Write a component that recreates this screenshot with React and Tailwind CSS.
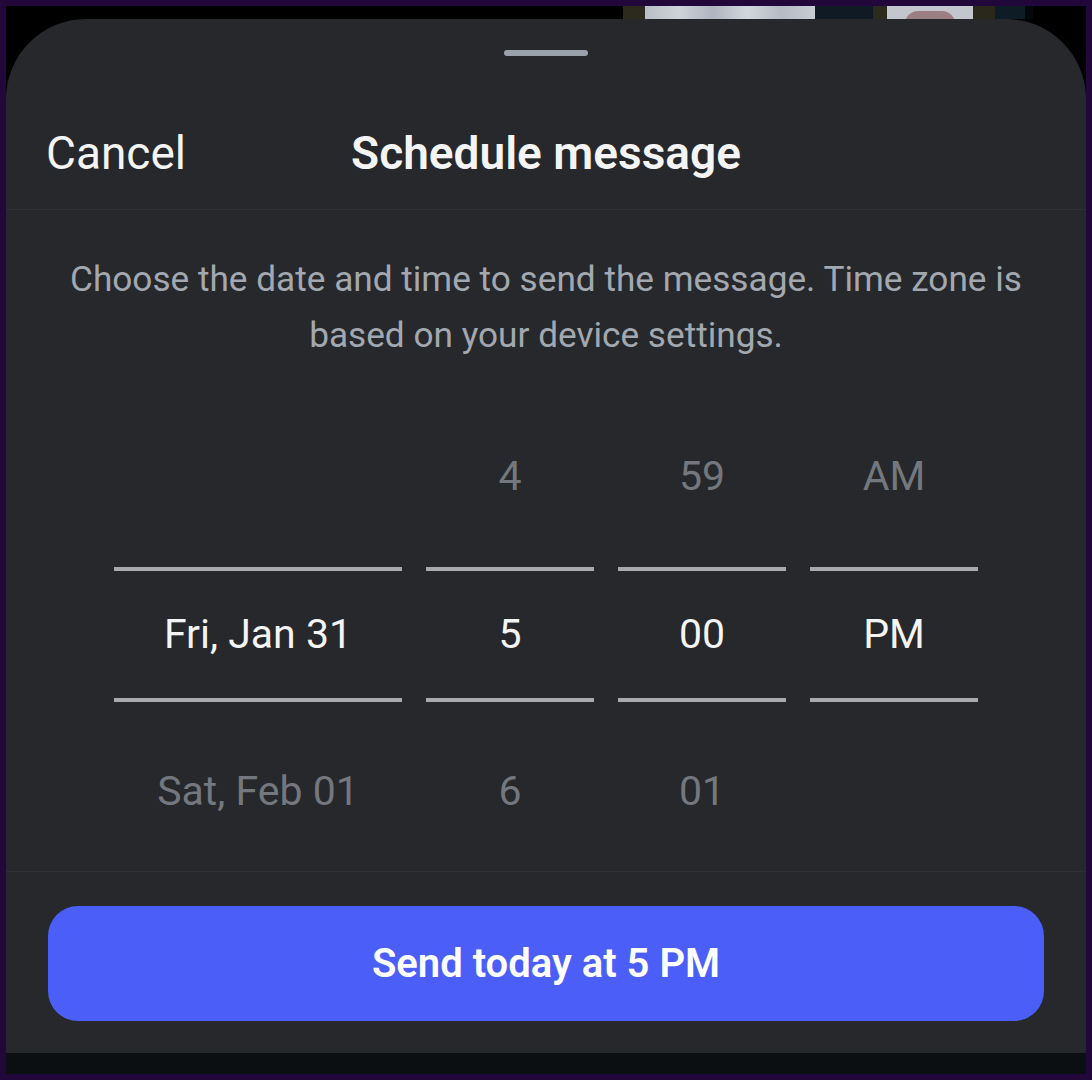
import React from "react";

const font = { fontFamily: "Roboto, 'Noto Sans', sans-serif" };

const columns = [
  { key: "date", width: "w-[288px]", prev: "", cur: "Fri, Jan 31", next: "Sat, Feb 01" },
  { key: "hour", width: "w-[168px]", prev: "4", cur: "5", next: "6" },
  { key: "min", width: "w-[168px]", prev: "59", cur: "00", next: "01" },
  { key: "ampm", width: "w-[168px]", prev: "AM", cur: "PM", next: "" },
];

const PickerColumn = ({ col }) => {
  return (
    <div className={`${col.width} flex flex-col`}>
      <div className="h-[150px] flex items-center justify-center text-[41px] text-[#74787e]">{col.prev}</div>
      <div className="h-[15px]" />
      <div className="h-[4px] bg-[#a9aaac]" />
      <div className="h-[127px] flex items-center justify-center text-[41px] text-[#f4f4f5]">{col.cur}</div>
      <div className="h-[4px] bg-[#a9aaac]" />
      <div className="h-[15px]" />
      <div className="h-[150px] flex items-center justify-center text-[41px] text-[#74787e]">{col.next}</div>
    </div>
  );
};

const App = () => {
  return (
    <div className="w-[1092px] h-[1080px] bg-[#21073a] p-[6px]" style={font}>
      <div className="h-full flex flex-col bg-black overflow-hidden">
        {/* bit of the screen behind the sheet */}
        <div className="h-[13px] flex shrink-0 pl-[617px]">
          <div className="w-[22px] bg-[#2b2a1c]" />
          <div className="w-[170px] bg-[linear-gradient(90deg,#b9bec8,#cfd2d8_20%,#aeb4c0_40%,#d3d6dc_60%,#b5bac4_80%,#c9ccd3)]" />
          <div className="w-[58px] bg-[#0f1a24]" />
          <div className="w-[14px] bg-[#2b2a1c]" />
          <div className="w-[86px] bg-[#c3c6cd] flex justify-center">
            <div className="w-[50px] h-[13px] mt-[5px] rounded-t-full bg-[#9c7f82]" />
          </div>
          <div className="w-[22px] bg-[#2a281a]" />
          <div className="w-[30px] bg-[#0e1c26]" />
          <div className="w-[8px] bg-[#05080b]" />
        </div>

        {/* sheet */}
        <div className="flex-1 flex flex-col rounded-t-[80px] bg-[#26282c]">
          <div className="mt-[31px] mx-auto w-[84px] h-[6px] rounded-full bg-[#9aa1ab]" />

          <div className="grid grid-cols-[1fr_auto_1fr] items-center px-[40px] pt-[69px] pb-[28px] border-b border-[#2e3035]">
            <div className="text-[46px] leading-[56px] text-[#f4f4f5]">Cancel</div>
            <div className="text-[46px] leading-[56px] font-semibold text-[#f4f4f5]">Schedule message</div>
            <div />
          </div>

          <p className="pt-[41px] px-[50px] text-center text-[35.2px] leading-[56px] text-[#a3a8b0]">
            Choose the date and time to send the message. Time zone is based on your device settings.
          </p>

          <div className="mt-[39px] flex justify-center gap-6">
            {columns.map((col) => (
              <PickerColumn key={col.key} col={col} />
            ))}
          </div>

          <div className="mt-auto border-t border-[#2e3035] px-[42px] pt-[34px] pb-[32px]">
            <button className="w-full h-[115px] rounded-[30px] bg-[#4b5ff8] text-white text-[40px] font-semibold">
              Send today at 5 PM
            </button>
          </div>
        </div>

        <div className="h-[21px] shrink-0 bg-[#0c0f12]" />
      </div>
    </div>
  );
};

export default App;
